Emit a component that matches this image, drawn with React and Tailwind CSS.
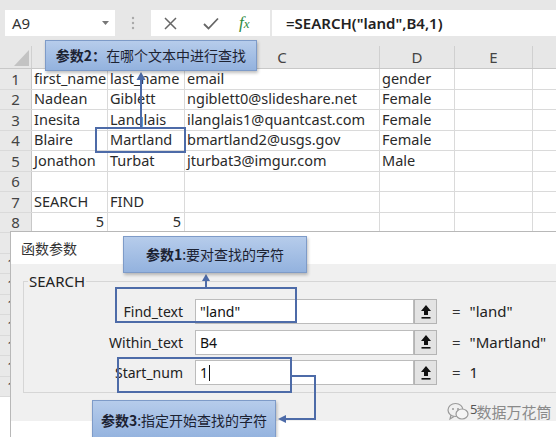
import React from "react";

const cols = ["w-[76px]", "w-[77px]", "w-[195px]", "w-[75px]", "w-[78px]"];
const heads = ["A", "B", "C", "D", "E"];
const data = [
  ["first_name", "last_name", "email", "gender"],
  ["Nadean", "Giblett", "ngiblett0@slideshare.net", "Female"],
  ["Inesita", "Langlais", "ilanglais1@quantcast.com", "Female"],
  ["Blaire", "Martland", "bmartland2@usgs.gov", "Female"],
  ["Jonathon", "Turbat", "jturbat3@imgur.com", "Male"],
  ["", "", "", ""],
  ["SEARCH", "FIND", "", ""],
  ["5", "5", "", ""],
  ["", "", "", ""],
  ["", "", "", ""],
  ["", "", "", ""],
  ["", "", "", ""],
  ["", "", "", ""],
  ["", "", "", ""],
  ["", "", "", ""],
  ["", "", "", ""],
];

function UpBtn() {
  return (
    <div className="w-[23px] h-[25px] bg-[#e3e3e3] border border-[#b4b4b4] flex items-center justify-center">
      <svg width="12" height="16" viewBox="0 0 12 16">
        <polygon points="6,1 11,7 8,7 8,11 4,11 4,7 1,7" fill="#111" />
        <rect x="1.5" y="13" width="9" height="1.6" fill="#111" />
      </svg>
    </div>
  );
}

function Field({ label, value, result }) {
  return (
    <div className="flex items-center h-[25px]">
      <div className="w-[160px] text-right text-[14px] text-[#222] pr-[1px]">{label}</div>
      <div className="ml-[11px] w-[219px] h-[25px] bg-white border border-[#bcbcbc] flex items-center pl-[4px] text-[14px] text-[#111]">
        {value}
      </div>
      <UpBtn />
      <div className="ml-[15px] text-[15px] text-[#333]">=</div>
      <div className="ml-[9px] text-[15px] text-[#222]">{result}</div>
    </div>
  );
}

function Callout({ className, bold, rest }) {
  return (
    <div
      className={
        "absolute flex items-center justify-center border border-[#7e9bc8] bg-linear-to-b from-[#b6cceb] to-[#93b2de] shadow-[1px_2px_3px_rgba(0,0,0,0.25)] text-[14px] text-[#1c2232] " +
        className
      }
      style={{ fontFamily: '"Noto Sans CJK SC", "Noto Sans", sans-serif' }}
    >
      <span className="font-bold">{bold}</span>
      <span>{rest}</span>
    </div>
  );
}

export default function App() {
  return (
    <div
      className="relative w-[556px] h-[437px] overflow-hidden bg-white"
      style={{ fontFamily: '"Noto Sans", "Noto Sans CJK SC", sans-serif' }}
    >
      {/* top bar */}
      <div className="h-[46px] bg-[#e7e7e7] flex items-start pt-[10px]">
        <div className="ml-[5px] w-[110px] h-[26px] bg-white flex items-center justify-between pl-[7px] pr-[6px]">
          <span className="text-[15px] text-[#333]">A9</span>
          <svg width="7" height="5" viewBox="0 0 7 5">
            <polygon points="0,0 7,0 3.5,4" fill="#777" />
          </svg>
        </div>
        <div className="w-[36px] h-[26px] flex items-center justify-center">
          <svg width="4" height="14" viewBox="0 0 4 14">
            <circle cx="2" cy="2" r="1.2" fill="#a8a8a8" />
            <circle cx="2" cy="7" r="1.2" fill="#a8a8a8" />
            <circle cx="2" cy="12" r="1.2" fill="#a8a8a8" />
          </svg>
        </div>
        <div className="w-[119px] h-[26px] bg-white flex items-center">
          <svg className="ml-[13px]" width="13" height="13" viewBox="0 0 13 13">
            <path d="M1 1 L12 12 M12 1 L1 12" stroke="#666" strokeWidth="1.5" />
          </svg>
          <svg className="ml-[26px]" width="16" height="13" viewBox="0 0 16 13">
            <path d="M1 7 L5.5 11.5 L15 1.5" stroke="#666" strokeWidth="1.8" fill="none" />
          </svg>
          <span
            className="ml-[20px] text-[17px] italic text-[#2e8b3e]"
            style={{ fontFamily: '"Liberation Serif", serif' }}
          >
            f<span className="text-[13px]">x</span>
          </span>
        </div>
        <div className="ml-[2px] flex-1 h-[26px] bg-white flex items-center pl-[14px] text-[15px] font-semibold text-[#222]">
          =SEARCH("land",B4,1)
        </div>
      </div>

      {/* column headers */}
      <div className="flex h-[23px] bg-[#e7e7e7] border-b border-[#c8c8c8]">
        <div className="w-[32px] relative border-r border-[#d0d0d0]">
          <svg className="absolute right-[2px] bottom-[2px]" width="15" height="16" viewBox="0 0 15 16">
            <polygon points="15,0 15,16 0,16" fill="#c3c3c3" />
          </svg>
        </div>
        {heads.map((h, i) => (
          <div
            key={h}
            className={cols[i] + " border-r border-[#d0d0d0] flex items-center justify-center text-[15px] text-[#444]"}
          >
            {h}
          </div>
        ))}
        <div className="flex-1" />
      </div>

      {/* grid rows */}
      {data.map((r, ri) => (
        <div key={ri} className="flex h-[20.5px] border-b border-[#dadada]">
          <div className="w-[32px] bg-[#e9e9e9] border-r border-[#c8c8c8] flex items-center justify-center text-[15px] text-[#444]">
            {ri + 1}
          </div>
          {cols.map((c, ci) => (
            <div
              key={ci}
              className={
                c +
                " border-r border-[#dadada] flex items-center px-[2px] text-[14.5px] text-[#2a2a2a] whitespace-nowrap overflow-visible " +
                (ri === 7 ? "justify-end pr-[3px]" : "")
              }
            >
              {ci < 4 ? r[ci] : ""}
            </div>
          ))}
          <div className="flex-1" />
        </div>
      ))}

      {/* dialog */}
      <div className="absolute left-[10px] top-[231px] right-0 bottom-0 border-l border-t border-[#b8b8b8] bg-white flex flex-col">
        <div
          className="h-[32px] bg-white flex items-center pl-[10px] text-[14px] text-[#333]"
          style={{ fontFamily: '"Noto Sans CJK SC", sans-serif' }}
        >
          函数参数
        </div>
        <div className="h-[157px] bg-[#f0f0f0] pt-[7px]">
          <fieldset className="ml-[12px] mr-[-10px] h-[122px] border border-[#d6d6d6]">
            <legend className="ml-[4px] px-[1px] text-[15px] leading-[20px] text-[#222]">SEARCH</legend>
            <div className="pt-[8px] flex flex-col gap-[5.5px]">
              <Field label="Find_text" value={'"land"'} result={'"land"'} />
              <Field label="Within_text" value="B4" result={'"Martland"'} />
              <Field
                label="Start_num"
                value={
                  <span className="flex items-center">
                    1<span className="ml-[1px] inline-block w-[1px] h-[16px] bg-[#111]" />
                  </span>
                }
                result="1"
              />
            </div>
          </fieldset>
        </div>
      </div>

      {/* watermark */}
      <div className="absolute left-[447px] top-[401px] flex items-center">
        <svg width="22" height="20" viewBox="0 0 22 20">
          <ellipse cx="8.5" cy="8" rx="7.5" ry="6.5" fill="none" stroke="#9a9a9a" strokeWidth="1.2" />
          <path d="M4 13 L3 17 L7 14.5" fill="none" stroke="#9a9a9a" strokeWidth="1.2" />
          <ellipse cx="15" cy="12" rx="6" ry="5" fill="#f5f5f5" stroke="#9a9a9a" strokeWidth="1.2" />
          <circle cx="6" cy="7" r="1" fill="#9a9a9a" />
          <circle cx="11" cy="7" r="1" fill="#9a9a9a" />
        </svg>
        <span className="ml-[1px] text-[13px] text-[#555] leading-none -mt-[6px]">5</span>
        <span
          className="-ml-[1px] text-[15px] text-[#8a8a8a]"
          style={{ fontFamily: '"Noto Sans CJK SC", sans-serif' }}
        >
          数据万花筒
        </span>
      </div>

      {/* highlight boxes */}
      <div className="absolute left-[95px] top-[127px] w-[91px] h-[26px] border-2 border-[#4d6ba8]" />
      <div className="absolute left-[115px] top-[287px] w-[182px] h-[36px] border-2 border-[#4d6ba8]" />
      <div className="absolute left-[117px] top-[357px] w-[175px] h-[36px] border-2 border-[#4d6ba8]" />

      {/* arrows */}
      <svg className="absolute inset-0 pointer-events-none" width="556" height="437" viewBox="0 0 556 437">
        <line x1="141" y1="128" x2="141" y2="78" stroke="#4d6ba8" strokeWidth="2" />
        <polygon points="141,72 136.5,80 145.5,80" fill="#4d6ba8" />
        <line x1="206" y1="288" x2="206" y2="279" stroke="#4d6ba8" strokeWidth="2" />
        <polygon points="206,274 202,281 210,281" fill="#4d6ba8" />
        <polyline points="292,376 315,376 315,419 285,419" fill="none" stroke="#4d6ba8" strokeWidth="2" />
        <polygon points="278,419 286,415 286,423" fill="#4d6ba8" />
      </svg>

      {/* callouts */}
      <Callout className="left-[45px] top-[40px] w-[212px] h-[31px]" bold="参数2：" rest="在哪个文本中进行查找" />
      <Callout className="left-[123px] top-[236px] w-[184px] h-[37px]" bold="参数1" rest=":要对查找的字符" />
      <Callout className="left-[92px] top-[400px] w-[184px] h-[40px]" bold="参数3" rest=":指定开始查找的字符" />
    </div>
  );
}
